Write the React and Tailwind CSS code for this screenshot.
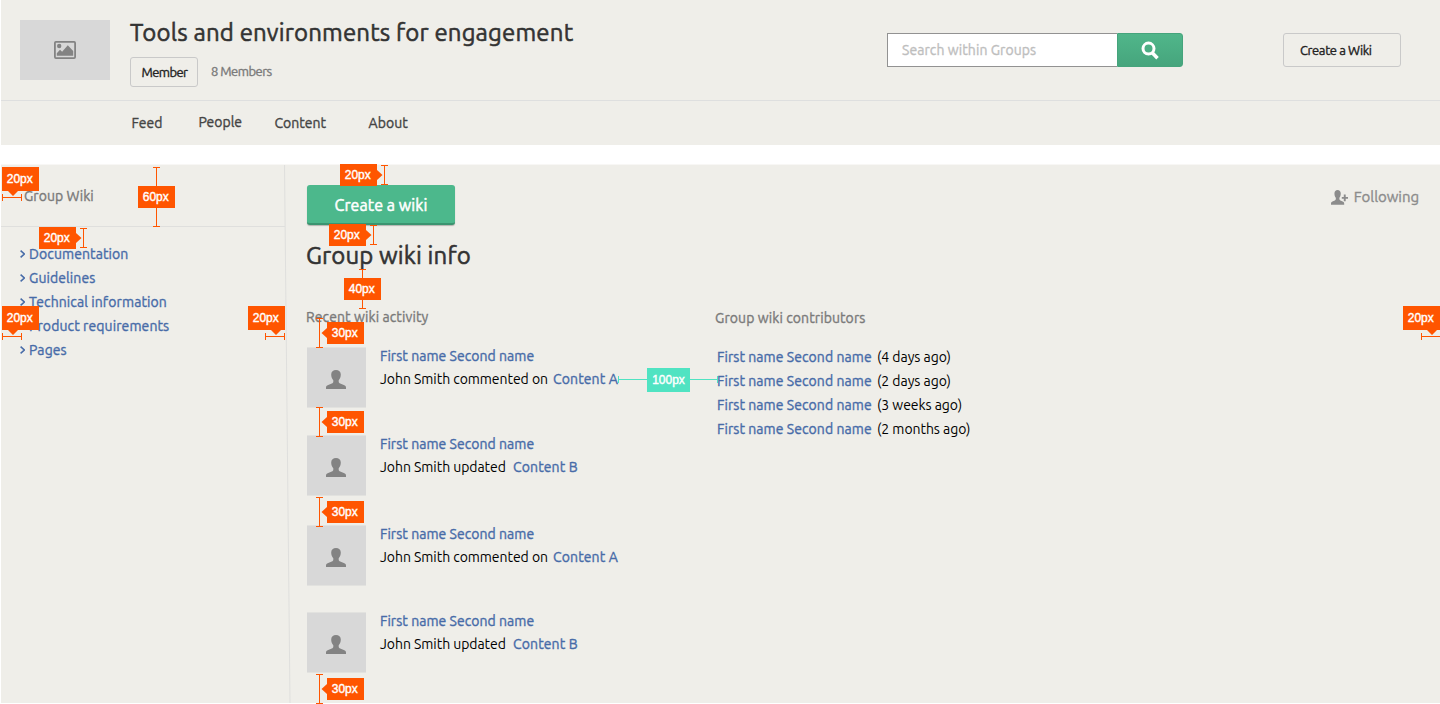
const F = "whitespace-nowrap font-['Ubuntu','Noto_Sans',sans-serif]";

function Text({ className = "", children }) {
  return <span className={`${F} inline-block ${className}`}>{children}</span>;
}

// Slightly heavier cut for headings, links and labels
function Strong({ className = "tracking-[0.1px]", children }) {
  return <span className={`${F} inline-block [-webkit-text-stroke:0.35px_currentColor] ${className}`}>{children}</span>;
}

const userPath =
  "M10 0C7.200 0 5.200 1.700 5.200 4.500c0 2.300.8 4.300 2.100 5.700v1.600c0 .9-.5 1.400-1.500 1.800L2.200 15C.6 15.700 0 16.300 0 17.700V19h20v-1.300c0-1.400-.6-2-2.200-2.700l-3.600-1.400c-1-.4-1.500-.9-1.500-1.800v-1.600c1.300-1.400 2.100-3.400 2.100-5.700C14.800 1.700 12.800 0 10 0z";

const pages = [
  "Documentation",
  "Guidelines",
  "Technical information",
  "Product requirements",
  "Pages",
];

const activity = [
  { action: "John Smith commented on", target: "Content A", width: "w-[173px]", gap: "" },
  { action: "John Smith updated", target: "Content B", width: "w-[133px]", gap: "mt-7" },
  { action: "John Smith commented on", target: "Content A", width: "w-[173px]", gap: "mt-[30px]" },
  { action: "John Smith updated", target: "Content B", width: "w-[133px]", gap: "mt-[27px]" },
];

const contributors = ["(4 days ago)", "(2 days ago)", "(3 weeks ago)", "(2 months ago)"];

const tags = [
  ["20px", "left-[2px] top-[167px] h-6"],
  ["60px", "left-[138px] top-[186px] h-[22px]"],
  ["20px", "left-[39px] top-[227px] h-[22px]"],
  ["20px", "left-[340px] top-[164px] h-[22px]"],
  ["20px", "left-[329px] top-[224px] h-[22px]"],
  ["40px", "left-[344px] top-[278px] h-[22px]"],
  ["30px", "left-[327px] top-[322px] h-[22px]"],
  ["30px", "left-[327px] top-[411px] h-[22px]"],
  ["30px", "left-[327px] top-[501px] h-[22px]"],
  ["30px", "left-[327px] top-[678px] h-[22px]"],
  ["20px", "left-[2px] top-[306px] h-6"],
  ["20px", "left-[248px] top-[306px] h-6"],
  ["20px", "left-[1403px] top-[306px] h-6"],
];

// Vertical rulers: [x, top, bottom]; horizontal rulers: [y, left, right]
const vertical = [
  [156, 167, 227], [83, 228, 248], [384, 165, 185], [373, 225, 245], [362, 269, 309],
  [319, 318, 348], [319, 407, 437], [319, 497, 527], [319, 674, 704],
];
const horizontal = [[197, 2, 22], [336, 2, 22], [336, 265, 285], [336, 1421, 1441]];

const vPath = ([x, a, b]) =>
  `M${x + 0.5} ${a}V${b}M${x - 3} ${a + 0.5}h7M${x - 3} ${b - 0.5}h7`;
const hPath = ([y, a, b]) =>
  `M${a} ${y + 0.5}H${b}M${a + 0.5} ${y - 3}v7M${b - 0.5} ${y - 3}v7`;

function Annotations() {
  return (
    <div className="pointer-events-none absolute inset-0">
      <svg width="1440" height="704" className="absolute inset-0" fill="none">
        <path d="M284.500 165L290 703" stroke="#dfdfdd" />
        <path d={vertical.map(vPath).join("") + horizontal.map(hPath).join("")} stroke="#ff5500" />
        <path d={hPath([379, 618, 718])} stroke="#50e3c2" />
        <path
          fill="#ff5500"
          d="M8 191h10l-5 5zM8 330h10l-5 5zM271 330h10l-5 5zM1427 330h10l-5 5zM76 233v10l5.500-5zM377 170v10l5.500-5zM366 230v10l5.500-5zM327 328v10l-5.500-5zM327 417v10l-5.500-5zM327 507v10l-5.500-5zM327 684v10l-5.500-5z"
        />
      </svg>
      {tags.map(([label, place], i) => (
        <span
          key={i}
          className={`absolute flex w-[37px] items-center justify-center bg-[#ff5500] pr-[1.5px] font-['Liberation_Sans',sans-serif] text-xs text-white [-webkit-text-stroke:0.4px_white] ${place}`}
        >
          {label}
        </span>
      ))}
      <span className="absolute left-[647px] top-[368px] flex h-6 w-[43px] items-center justify-center bg-[#50e3c2] font-['Liberation_Sans',sans-serif] text-xs text-white [-webkit-text-stroke:0.4px_white]">
        100px
      </span>
    </div>
  );
}

export default function App() {
  return (
    <div className="relative h-[704px] w-[1440px] overflow-hidden bg-white pl-px text-sm">
      <header className="h-[145px] bg-[#efeee9]">
        <div className="flex h-[101px] border-b border-[#dedfdf] pl-[19px] pt-5">
          <div className="flex h-[60px] w-[90px] items-center justify-center bg-[#d8d8d8] text-[#838383]">
            <svg width="22" height="18" viewBox="0 0 22 18">
              <rect x="0.900" y="0.900" width="20.200" height="16.200" rx="1" fill="none" stroke="currentColor" strokeWidth="1.800" />
              <circle cx="5.200" cy="5" r="2.200" fill="currentColor" />
              <path d="M2.800 14.800v-2.600l3.200-3.400 2.100 2 5.700-6.500 5.400 5.600v4.900z" fill="currentColor" />
            </svg>
          </div>
          <div className="ml-5 w-[757px]">
            <h1 className="-mt-[3px] h-8 leading-8">
              <span className={`${F} inline-block text-2xl leading-8 text-[#333] tracking-[0.16px] [-webkit-text-stroke:0.55px_currentColor]`}>Tools and environments for engagement</span>
            </h1>
            <div className="mt-2 flex items-center">
              <button className="flex h-[30px] w-[68px] items-center justify-center rounded-[3px] border border-[#c9c9c9] pl-px">
                <Strong className="text-[13px] text-[#222] tracking-[-0.6px]">Member</Strong>
              </button>
              <Strong className="ml-[13px] pb-0.5 text-[13px] tracking-[-0.52px] text-[#7a7a7a]">8 Members</Strong>
            </div>
          </div>
          <div className="mt-[13px] flex h-[34px] w-[296px]">
            <div className="flex w-[230px] items-center border border-r-0 border-[#929292] bg-white pl-3.5">
              <Strong className="text-[#bebebe] tracking-[0.08px]">Search within Groups</Strong>
            </div>
            <button className="flex w-[66px] items-center justify-center rounded-r-[3px] border border-[#45a47c] bg-linear-to-b from-[#50b68a] to-[#46a57d]">
              <svg width="18" height="19" viewBox="0 0 18 19" fill="none" stroke="white">
                <circle cx="7.500" cy="7.600" r="5.500" strokeWidth="3" />
                <path d="M11.500 12l5 5.200" strokeWidth="3.500" />
              </svg>
            </button>
          </div>
          <button className="ml-[100px] mt-[13px] flex h-[34px] w-[118px] items-center rounded-[3px] border border-[#c9c9c9] pl-4">
            <Strong className="text-[13px] text-[#222] tracking-[-0.4px]">Create a Wiki</Strong>
          </button>
        </div>
        <nav className="flex h-11 items-center pl-[130.500px] text-[#444]">
          <Strong className="w-[67px]">Feed</Strong>
          <Strong className="w-[76px] pb-0.5">People</Strong>
          <Strong className="w-[94px]">Content</Strong>
          <Strong>About</Strong>
        </nav>
      </header>

      <main className="mt-[19px] flex h-[539px] border-t border-[#f8f7f5] bg-[#efeee9]">
        <aside className="w-[284px] shrink-0">
          <div className="flex h-[62px] items-center border-b border-[#dfdfdd] pl-[23px]">
            <Strong className="text-[#7a7a7a] tracking-[0.05px]">Group Wiki</Strong>
          </div>
          <ul className="pl-[19px] pt-[15px]">
            {pages.map((label) => (
              <li key={label} className="flex h-6 items-center text-[#476ba8]">
                <svg width="5" height="8" viewBox="0 0 5 8" fill="none" stroke="currentColor" strokeWidth="1.500" className="mr-1">
                  <path d="M0.600 0.600L4.300 4 0.600 7.400" />
                </svg>
                <Strong>{label}</Strong>
              </li>
            ))}
          </ul>
        </aside>

        <div className="flex grow flex-col pl-[21px] pt-5">
          <div className="flex justify-between pr-[21px]">
            <button className="ml-px flex h-10 w-[148px] items-center justify-center rounded-[3px] border-b-2 border-[#3b9470] bg-[#4cb88c] pt-0.5 shadow-[0_1px_1px_rgba(0,0,0,0.25)]">
              <span className={`${F} text-base text-white tracking-[0.08px] [-webkit-text-stroke:0.5px_currentColor]`}>Create a wiki</span>
            </button>
            <div className="flex h-6 items-center text-[#8c8c8c]">
              <svg viewBox="0 0 17 15" className="h-[15px] w-[17px]" fill="currentColor">
                <path d={userPath} transform="scale(0.660 0.770)" />
                <path d="M12.800 4.500h1.900v2.400h2.300v1.900h-2.300v2.400h-1.900V8.800h-2V6.900h2z" />
              </svg>
              <Strong className="ml-1.5 text-[15px] tracking-[-0.05px]">Following</Strong>
            </div>
          </div>
          <h2 className="mt-[15px] h-8 leading-8">
            <span className={`${F} inline-block text-2xl leading-8 text-[#333] tracking-[0.13px] [-webkit-text-stroke:0.55px_currentColor]`}>Group wiki info</span>
          </h2>
          <div className="mt-[33px] flex">
            <section className="w-[409px]">
              <h3 className="flex h-6 items-center text-[#7a7a7a]">
                <Strong>Recent wiki activity</Strong>
              </h3>
              <ul className="ml-px mt-[18px]">
                {activity.map(({ action, target, width, gap }, i) => (
                  <li key={i} className={`flex h-[60px] ${gap}`}>
                    <div className="flex h-[61px] w-[59px] items-center justify-center border-y border-[#e2e2df] bg-[#d8d8d8] pr-[1.500px] pt-[3px] text-[#838383]">
                      <svg viewBox="0 0 20 19" className="h-[19px] w-5" fill="currentColor">
                        <path d={userPath} />
                      </svg>
                    </div>
                    <div className="-mt-[3px] ml-3.5">
                      <div className="flex h-[23px] items-center text-[#476ba8]">
                        <Strong className="tracking-[0.05px]">First name Second name</Strong>
                      </div>
                      <div className="flex h-[23px] items-center">
                        <Text className={`tracking-[-0.05px] text-black ${width}`}>{action}</Text>
                        <Strong className="tracking-[0.13px] text-[#476ba8]">{target}</Strong>
                      </div>
                    </div>
                  </li>
                ))}
              </ul>
            </section>
            <section className="pt-px">
              <h3 className="flex h-6 items-center text-[#7a7a7a]">
                <Strong>Group wiki contributors</Strong>
              </h3>
              <ul className="ml-0.5 mt-[15px]">
                {contributors.map((when) => (
                  <li key={when} className="flex h-6 items-center">
                    <Strong className="w-40 tracking-[0.07px] text-[#476ba8]">First name Second name</Strong>
                    <Text className="tracking-[-0.05px] text-black">{when}</Text>
                  </li>
                ))}
              </ul>
            </section>
          </div>
        </div>
      </main>
      <Annotations />
    </div>
  );
}
